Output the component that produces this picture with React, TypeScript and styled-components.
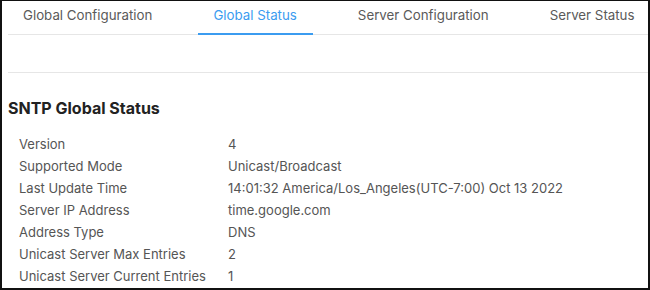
import React, { FC, useState } from "react";
import styled, { createGlobalStyle } from "styled-components";

const GlobalStyle = createGlobalStyle`
  html, body {
    margin: 0;
    padding: 0;
    background: #fff;
  }
  body {
    font-family: Inter, "Liberation Sans", Arial, sans-serif;
  }
`;

const Frame = styled.div`
  width: 650px;
  height: 290px;
  box-sizing: border-box;
  border: 2px solid #111;
  border-top-width: 1px;
  overflow: hidden;
  padding-left: 6px;
`;

const TabBar = styled.div`
  display: flex;
  gap: 30px;
  height: 33px;
  border-bottom: 1px solid #e6e6e6;
`;

const Tab = styled.div<{ active: boolean }>`
  display: flex;
  align-items: flex-start;
  padding: 6px 16px 0 15px;
  font-size: 13.3px;
  line-height: 16px;
  color: ${(props) => (props.active ? "#3b9cf0" : "#5a5a5a")};
  border-bottom: 2px solid
    ${(props) => (props.active ? "#3b9cf0" : "transparent")};
  margin-bottom: -1px;
  white-space: nowrap;
  cursor: pointer;
`;

const Toolbar = styled.div`
  height: 37px;
  border-bottom: 1px solid #e6e6e6;
`;

const Heading = styled.h2`
  margin: 0;
  padding: 25px 0 0;
  height: 45px;
  box-sizing: border-box;
  font-size: 16px;
  font-weight: 700;
  color: #222;
`;

const Table = styled.div`
  display: grid;
  grid-template-columns: 209px 1fr;
  padding-left: 11px;
  padding-top: 15px;
  font-size: 13px;
  color: #555;
`;

const Cell = styled.div`
  height: 22px;
  line-height: 22px;
  white-space: nowrap;
`;

const rows: [string, string][] = [
  ["Version", "4"],
  ["Supported Mode", "Unicast/Broadcast"],
  ["Last Update Time", "14:01:32 America/Los_Angeles(UTC-7:00) Oct 13 2022"],
  ["Server IP Address", "time.google.com"],
  ["Address Type", "DNS"],
  ["Unicast Server Max Entries", "2"],
  ["Unicast Server Current Entries", "1"],
];

const tabs = [
  "Global Configuration",
  "Global Status",
  "Server Configuration",
  "Server Status",
];

const App: FC = () => {
  const [active, setActive] = useState(1);

  return (
    <>
      <GlobalStyle />
      <Frame>
        <TabBar>
          {tabs.map((t, i) => (
            <Tab key={t} active={i === active} onClick={() => setActive(i)}>
              {t}
            </Tab>
          ))}
        </TabBar>
        <Toolbar />
        <Heading>SNTP Global Status</Heading>
        <Table>
          {rows.map(([label, value]) => (
            <React.Fragment key={label}>
              <Cell>{label}</Cell>
              <Cell>{value}</Cell>
            </React.Fragment>
          ))}
        </Table>
      </Frame>
    </>
  );
};

export default App;
